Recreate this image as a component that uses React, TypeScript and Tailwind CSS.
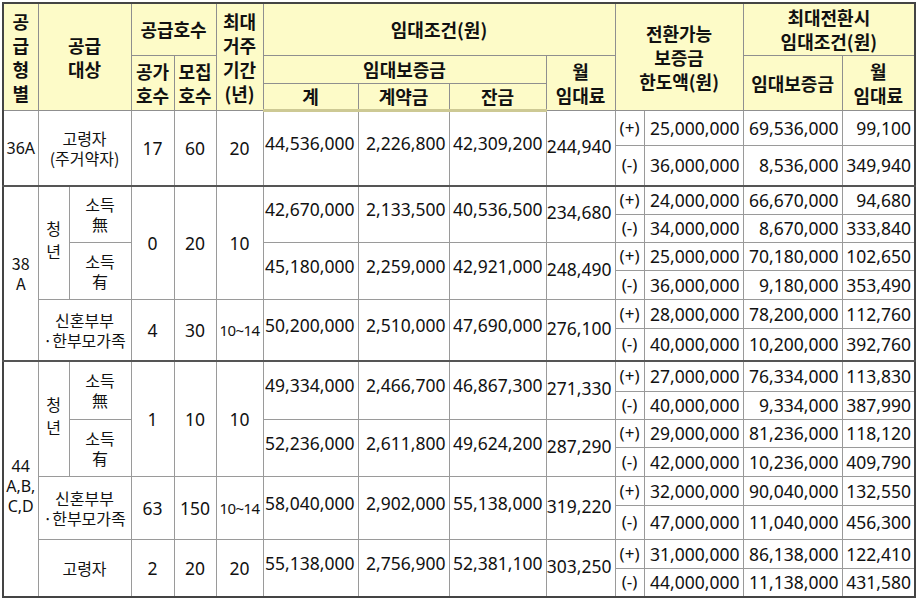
import React from "react";

type Sub = { sign: string; limit: string; deposit: string; rent: string };
type Row = {
  total: string;
  contract: string;
  balance: string;
  monthly: string;
  subs: [Sub, Sub];
  heights: [number, number];
};

const font = { fontFamily: '"Noto Sans", "Noto Sans CJK KR", sans-serif' };
const hangul = { fontFamily: '"Noto Sans CJK KR", "Noto Sans", sans-serif' };

const cell = "border border-[#9a9a9a] p-0 text-center align-middle";
const kcell = "border border-[#9a9a9a] p-0 text-center align-middle text-[16px]";
const head = "border border-[#8f8f8f] bg-[#fdfbc8] p-0 text-center align-middle font-bold leading-[24px]";
const amt = "border border-[#9a9a9a] p-0 pr-[3px] pb-[10px] text-right align-middle";
const sub = "border border-[#9a9a9a] p-0 pr-[3px] text-right align-middle";

const r = (
  total: string,
  contract: string,
  balance: string,
  monthly: string,
  plus: [string, string, string],
  minus: [string, string, string],
  heights: [number, number]
): Row => ({
  total,
  contract,
  balance,
  monthly,
  subs: [
    { sign: "(+)", limit: plus[0], deposit: plus[1], rent: plus[2] },
    { sign: "(-)", limit: minus[0], deposit: minus[1], rent: minus[2] },
  ],
  heights,
});

const rows = {
  a36: r("44,536,000", "2,226,800", "42,309,200", "244,940", ["25,000,000", "69,536,000", "99,100"], ["36,000,000", "8,536,000", "349,940"], [35, 41]),
  a38n: r("42,670,000", "2,133,500", "40,536,500", "234,680", ["24,000,000", "66,670,000", "94,680"], ["34,000,000", "8,670,000", "333,840"], [28, 28]),
  a38y: r("45,180,000", "2,259,000", "42,921,000", "248,490", ["25,000,000", "70,180,000", "102,650"], ["36,000,000", "9,180,000", "353,490"], [28, 29]),
  a38m: r("50,200,000", "2,510,000", "47,690,000", "276,100", ["28,000,000", "78,200,000", "112,760"], ["40,000,000", "10,200,000", "392,760"], [29, 33]),
  a44n: r("49,334,000", "2,466,700", "46,867,300", "271,330", ["27,000,000", "76,334,000", "113,830"], ["40,000,000", "9,334,000", "387,990"], [30, 28]),
  a44y: r("52,236,000", "2,611,800", "49,624,200", "287,290", ["29,000,000", "81,236,000", "118,120"], ["42,000,000", "10,236,000", "409,790"], [28, 29]),
  a44m: r("58,040,000", "2,902,000", "55,138,000", "319,220", ["32,000,000", "90,040,000", "132,550"], ["47,000,000", "11,040,000", "456,300"], [29, 34]),
  a44s: r("55,138,000", "2,756,900", "52,381,100", "303,250", ["31,000,000", "86,138,000", "122,410"], ["44,000,000", "11,138,000", "431,580"], [29, 29]),
};

const Amounts = ({ row }: { row: Row }) => (
  <>
    <td rowSpan={2} className={amt}>{row.total}</td>
    <td rowSpan={2} className={amt}>{row.contract}</td>
    <td rowSpan={2} className={amt}>{row.balance}</td>
    <td rowSpan={2} className={`${sub} pb-[4px]`}>{row.monthly}</td>
  </>
);

const SubCells = ({ s }: { s: Sub }) => (
  <>
    <td className={`${cell} text-[17px]`}>{s.sign}</td>
    <td className={sub}>{s.limit}</td>
    <td className={sub}>{s.deposit}</td>
    <td className={sub}>{s.rent}</td>
  </>
);

const Two = ({ a, b, lh = "leading-[20px]" }: { a: string; b: string; lh?: string }) => (
  <div className={lh} style={hangul}>
    <div>{a}</div>
    <div>{b}</div>
  </div>
);

export default function App() {
  const groupTop = "[&>td]:border-t-2 [&>td]:border-t-[#555]";
  return (
    <div className="bg-white w-[917px] h-[601px] pt-[2px] pl-[2px]" style={font}>
      <table className="table-fixed border-collapse border-2 border-[#444] text-[17.5px] leading-[22px] text-[#111] w-[913px]">
        <colgroup>
          <col className="w-[35px]" />
          <col className="w-[31px]" />
          <col className="w-[62px]" />
          <col className="w-[43px]" />
          <col className="w-[42px]" />
          <col className="w-[47px]" />
          <col className="w-[95px]" />
          <col className="w-[91px]" />
          <col className="w-[97px]" />
          <col className="w-[69px]" />
          <col className="w-[29px]" />
          <col className="w-[99px]" />
          <col className="w-[99px]" />
          <col className="w-[73px]" />
        </colgroup>
        <thead className="text-[18px]" style={hangul}>
          <tr className="h-[52px]">
            <th rowSpan={3} className={`${head} leading-[23px]`}>
              공<br />급<br />형<br />별
            </th>
            <th rowSpan={3} colSpan={2} className={head}>
              공급<br />대상
            </th>
            <th colSpan={2} className={head}>공급호수</th>
            <th rowSpan={3} className={head}>
              최대<br />거주<br />기간<br />(년)
            </th>
            <th colSpan={4} className={head}>임대조건(원)</th>
            <th rowSpan={3} colSpan={2} className={head}>
              전환가능<br />보증금<br />한도액(원)
            </th>
            <th colSpan={2} className={head}>
              최대전환시<br />임대조건(원)
            </th>
          </tr>
          <tr className="h-[28px]">
            <th rowSpan={2} className={head}>
              공가<br />호수
            </th>
            <th rowSpan={2} className={head}>
              모집<br />호수
            </th>
            <th colSpan={3} className={head}>임대보증금</th>
            <th rowSpan={2} className={head}>
              월<br />임대료
            </th>
            <th rowSpan={2} className={head}>임대보증금</th>
            <th rowSpan={2} className={head}>
              월<br />임대료
            </th>
          </tr>
          <tr className="h-[27px] [&>th]:border-b-[3px] [&>th]:border-b-[#cdc994]">
            <th className={head}>계</th>
            <th className={head}>계약금</th>
            <th className={head}>잔금</th>
          </tr>
        </thead>
        <tbody>
          {/* 36A */}
          <tr style={{ height: rows.a36.heights[0] }}>
            <td rowSpan={2} className={`${cell} text-[16px]`}>36A</td>
            <td rowSpan={2} colSpan={2} className={kcell}>
              <Two a="고령자" b="(주거약자)" />
            </td>
            <td rowSpan={2} className={cell}>17</td>
            <td rowSpan={2} className={cell}>60</td>
            <td rowSpan={2} className={cell}>20</td>
            <Amounts row={rows.a36} />
            <SubCells s={rows.a36.subs[0]} />
          </tr>
          <tr style={{ height: rows.a36.heights[1] }}>
            <SubCells s={rows.a36.subs[1]} />
          </tr>

          {/* 38A */}
          <tr className={groupTop} style={{ height: rows.a38n.heights[0] }}>
            <td rowSpan={6} className={`${cell} text-[16px] pb-[2px]`}>
              <Two a="38" b="A" />
            </td>
            <td rowSpan={4} className={`${kcell} pb-[6px]`}>
              <Two a="청" b="년" lh="leading-[23px]" />
            </td>
            <td rowSpan={2} className={kcell}>
              <Two a="소득" b="無" />
            </td>
            <td rowSpan={4} className={cell}>0</td>
            <td rowSpan={4} className={cell}>20</td>
            <td rowSpan={4} className={cell}>10</td>
            <Amounts row={rows.a38n} />
            <SubCells s={rows.a38n.subs[0]} />
          </tr>
          <tr style={{ height: rows.a38n.heights[1] }}>
            <SubCells s={rows.a38n.subs[1]} />
          </tr>
          <tr style={{ height: rows.a38y.heights[0] }}>
            <td rowSpan={2} className={kcell}>
              <Two a="소득" b="有" />
            </td>
            <Amounts row={rows.a38y} />
            <SubCells s={rows.a38y.subs[0]} />
          </tr>
          <tr style={{ height: rows.a38y.heights[1] }}>
            <SubCells s={rows.a38y.subs[1]} />
          </tr>
          <tr style={{ height: rows.a38m.heights[0] }}>
            <td rowSpan={2} colSpan={2} className={kcell}>
              <Two a="신혼부부" b="·한부모가족" />
            </td>
            <td rowSpan={2} className={cell}>4</td>
            <td rowSpan={2} className={cell}>30</td>
            <td rowSpan={2} className={`${cell} text-[15px] tracking-[-0.6px]`}>10~14</td>
            <Amounts row={rows.a38m} />
            <SubCells s={rows.a38m.subs[0]} />
          </tr>
          <tr style={{ height: rows.a38m.heights[1] }}>
            <SubCells s={rows.a38m.subs[1]} />
          </tr>

          {/* 44A,B,C,D */}
          <tr className={groupTop} style={{ height: rows.a44n.heights[0] }}>
            <td rowSpan={8} className={`${cell} text-[16px] leading-[20px] pt-[14px]`}>
              <div>44</div>
              <div>A,B,</div>
              <div>C,D</div>
            </td>
            <td rowSpan={4} className={`${kcell} pb-[6px]`}>
              <Two a="청" b="년" lh="leading-[23px]" />
            </td>
            <td rowSpan={2} className={kcell}>
              <Two a="소득" b="無" />
            </td>
            <td rowSpan={4} className={cell}>1</td>
            <td rowSpan={4} className={cell}>10</td>
            <td rowSpan={4} className={cell}>10</td>
            <Amounts row={rows.a44n} />
            <SubCells s={rows.a44n.subs[0]} />
          </tr>
          <tr style={{ height: rows.a44n.heights[1] }}>
            <SubCells s={rows.a44n.subs[1]} />
          </tr>
          <tr style={{ height: rows.a44y.heights[0] }}>
            <td rowSpan={2} className={kcell}>
              <Two a="소득" b="有" />
            </td>
            <Amounts row={rows.a44y} />
            <SubCells s={rows.a44y.subs[0]} />
          </tr>
          <tr style={{ height: rows.a44y.heights[1] }}>
            <SubCells s={rows.a44y.subs[1]} />
          </tr>
          <tr style={{ height: rows.a44m.heights[0] }}>
            <td rowSpan={2} colSpan={2} className={kcell}>
              <Two a="신혼부부" b="·한부모가족" />
            </td>
            <td rowSpan={2} className={cell}>63</td>
            <td rowSpan={2} className={cell}>150</td>
            <td rowSpan={2} className={`${cell} text-[15px] tracking-[-0.6px]`}>10~14</td>
            <Amounts row={rows.a44m} />
            <SubCells s={rows.a44m.subs[0]} />
          </tr>
          <tr style={{ height: rows.a44m.heights[1] }}>
            <SubCells s={rows.a44m.subs[1]} />
          </tr>
          <tr style={{ height: rows.a44s.heights[0] }}>
            <td rowSpan={2} colSpan={2} className={kcell} style={hangul}>고령자</td>
            <td rowSpan={2} className={cell}>2</td>
            <td rowSpan={2} className={cell}>20</td>
            <td rowSpan={2} className={cell}>20</td>
            <Amounts row={rows.a44s} />
            <SubCells s={rows.a44s.subs[0]} />
          </tr>
          <tr style={{ height: rows.a44s.heights[1] }}>
            <SubCells s={rows.a44s.subs[1]} />
          </tr>
        </tbody>
      </table>
    </div>
  );
}
